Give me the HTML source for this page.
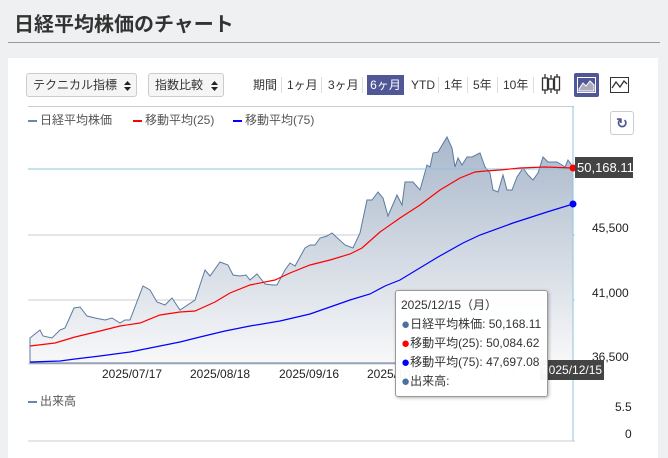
<!DOCTYPE html>
<html><head><meta charset="utf-8"><style>
*{margin:0;padding:0;box-sizing:border-box}
body{width:668px;height:446px;background:#eef0f2;font-family:"Liberation Sans","Noto Sans CJK JP",sans-serif;position:relative;overflow:hidden;color:#333}
.t{position:absolute;left:14px;top:8px;font-size:20px;font-weight:bold;color:#333}
.hr{position:absolute;left:8px;top:42px;width:652px;height:1px;background:#999}
.card{position:absolute;left:8px;top:58px;width:650px;height:400px;background:#fff}
.sel{position:absolute;top:73px;height:24px;border:1px solid #ccc;border-radius:3px;background:#f5f5f5;font-size:12px;line-height:22px;padding-left:6px;color:#333}
.sel svg{position:absolute;right:5px;top:7px}
.p{position:absolute;top:76px;font-size:12px;color:#333;line-height:18px}
.sep{position:absolute;top:77px;width:1px;height:16px;background:#ddd}
.lg{position:absolute;font-size:12px;color:#555}
.lg i{display:inline-block;width:9px;height:2px;vertical-align:middle;margin-right:3px}
.ax{position:absolute;font-size:12px;color:#222}
.d{font-size:15px;line-height:12px;vertical-align:-1px}
</style></head><body>
<div class="t">日経平均株価のチャート</div>
<div class="hr"></div>
<div class="card"></div>
<div class="sel" style="left:26px;width:111px">テクニカル指標<svg width="7" height="10"><path d="M0 4L3.5 0L7 4ZM0 6L3.5 10L7 6Z" fill="#222"/></svg></div>
<div class="sel" style="left:148px;width:76px">指数比較<svg width="7" height="10"><path d="M0 4L3.5 0L7 4ZM0 6L3.5 10L7 6Z" fill="#222"/></svg></div>
<div class="p" style="left:253px">期間</div><div class="sep" style="left:281px"></div>
<div class="p" style="left:287px">1ヶ月</div><div class="sep" style="left:321px"></div>
<div class="p" style="left:328px">3ヶ月</div><div class="sep" style="left:362px"></div>
<div class="p" style="left:367px;background:#4f5797;color:#fff;padding:0 3px;top:75px;height:20px;line-height:20px;width:37px;text-align:center">6ヶ月</div>
<div class="p" style="left:411px">YTD</div><div class="sep" style="left:438px"></div>
<div class="p" style="left:444px">1年</div><div class="sep" style="left:467px"></div>
<div class="p" style="left:473px">5年</div><div class="sep" style="left:497px"></div>
<div class="p" style="left:503px">10年</div><div class="sep" style="left:533px"></div>
<svg style="position:absolute;left:540px;top:72px" width="22" height="24"><g stroke="#333" stroke-width="1.3" fill="none"><line x1="5" y1="2" x2="5" y2="22"/><rect x="2.5" y="6" width="5" height="12" fill="#fff"/><line x1="11" y1="3" x2="11" y2="21"/><rect x="8.5" y="7" width="5" height="10" fill="#fff"/><line x1="17" y1="2" x2="17" y2="22"/><rect x="14.5" y="5" width="5" height="13" fill="#fff"/></g></svg>
<div style="position:absolute;left:574px;top:73px;width:25px;height:24px;background:#4f5797;border-radius:2px"></div>
<svg style="position:absolute;left:577px;top:77px" width="19" height="16"><rect x="0.5" y="0.5" width="18" height="15" fill="none" stroke="#fff"/><path d="M2 12 L6 6 L9 9 L13 4 L17 8 L17 14 L2 14Z" fill="#aab" stroke="#fff"/></svg>
<svg style="position:absolute;left:610px;top:77px" width="19" height="16"><rect x="0.5" y="0.5" width="18" height="15" fill="none" stroke="#333"/><path d="M2 11 L6 5 L10 10 L14 4 L17 7" fill="none" stroke="#333" stroke-width="1.3"/></svg>
<div style="position:absolute;left:28px;top:106px;width:546px;height:1px;background:#ccc"></div>
<div style="position:absolute;left:610px;top:111px;width:24px;height:24px;border:1px solid #ccc;border-radius:3px;background:#fff;color:#4f5797;font-size:14px;text-align:center;line-height:22px;font-weight:bold">↻</div>
<div class="lg" style="left:28px;top:111px"><i style="background:#6b86aa"></i>日経平均株価</div>
<div class="lg" style="left:133px;top:111px"><i style="background:#f00"></i>移動平均(25)</div>
<div class="lg" style="left:233px;top:111px"><i style="background:#00f"></i>移動平均(75)</div>
<div class="lg" style="left:28px;top:392px"><i style="background:#6b86aa"></i>出来高</div>
<svg style="position:absolute;left:0;top:0" width="668" height="446">
<defs><linearGradient id="g" x1="0" y1="0" x2="0" y2="1"><stop offset="0" stop-color="#a9b8cb"/><stop offset="1" stop-color="#f8f8f9"/></linearGradient></defs>
<line x1="28" y1="235" x2="575" y2="235" stroke="#ccc"/>
<line x1="28" y1="300" x2="575" y2="300" stroke="#ccc"/>
<line x1="28" y1="364" x2="575" y2="364" stroke="#ccc"/>
<line x1="28" y1="441" x2="575" y2="441" stroke="#ccc"/>
<path d="M30 338 L40 330 L43 336 L52 338 L60 330 L65 328 L74 308 L80 307 L87 316 L95 318 L105 320 L112 318 L120 323 L125 320 L130 320 L143 286 L150 290 L157 302 L165 305 L172 298 L180 310 L195 300 L205 270 L210 276 L220 262 L228 265 L233 275 L240 276 L246 275 L250 280 L257 274 L265 284 L273 285 L277 285 L285 270 L290 263 L295 266 L305 248 L310 245 L315 245 L320 238 L327 236 L332 233 L345 245 L353 248 L360 233 L367 200 L372 200 L378 192 L383 198 L388 216 L397 195 L402 205 L405 182 L413 182 L420 190 L427 165 L430 167 L433 153 L438 152 L447 137 L452 148 L455 167 L458 158 L462 165 L467 157 L472 157 L480 153 L485 167 L490 173 L493 190 L498 192 L503 175 L507 190 L512 190 L517 177 L523 168 L528 175 L533 180 L538 173 L543 157 L548 162 L557 162 L562 165 L565 167 L568 160 L573 167 L573 363 L30 363Z" fill="url(#g)" stroke="#5c7aa0" stroke-width="1"/>
<line x1="28" y1="169" x2="573" y2="169" stroke="#8cc4e0"/>
<line x1="573" y1="106" x2="573" y2="441" stroke="#8cc4e0"/>
<polyline points="30,346 55,343 75,337 100,331 120,326 140,323 160,315 180,312 195,311 215,302 230,293 250,285 275,280 290,273 310,265 330,260 350,254 362,248 380,232 400,218 420,205 440,190 460,178 475,172 485,171 500,170 520,168 545,167 573,168" fill="none" stroke="#f00" stroke-width="1.2"/>
<polyline points="30,362 60,361 75,359 100,356 130,352 150,348 165,345 180,342 200,337 225,331 250,326 280,321 310,314 330,307 350,300 370,294 385,286 400,280 438,257 463,243 480,235 513,223 547,212 573,204" fill="none" stroke="#00f" stroke-width="1.2"/>
<circle cx="573" cy="168" r="3.5" fill="#f00"/><circle cx="573" cy="204" r="3.5" fill="#00f"/>
</svg>
<div class="ax" style="left:592px;top:157px">50,000</div>
<div style="position:absolute;left:575px;top:157px;width:58px;height:21px;background:#444;color:#fff;font-size:13px;line-height:21px;padding-left:2px">50,168.11</div>
<div class="ax" style="left:592px;top:221px">45,500</div>
<div class="ax" style="left:592px;top:286px">41,000</div>
<div class="ax" style="left:592px;top:350px">36,500</div>
<div class="ax" style="left:615px;top:400px">5.5</div>
<div class="ax" style="left:625px;top:427px">0</div>
<div class="ax" style="left:102px;top:367px">2025/07/17</div>
<div class="ax" style="left:190px;top:367px">2025/08/18</div>
<div class="ax" style="left:279px;top:367px">2025/09/16</div>
<div class="ax" style="left:367px;top:367px">2025/10/16</div>
<div class="ax" style="left:456px;top:367px;color:#ccc">2025/11/14</div>
<div style="position:absolute;left:540px;top:360px;width:64px;height:20px;background:#444;color:#fff;font-size:12px;line-height:20px;padding-left:2px">2025/12/15</div>
<div style="position:absolute;left:395px;top:290px;width:153px;height:107px;background:rgba(255,255,255,.96);border:1px solid #999;border-radius:3px;box-shadow:1px 1px 3px rgba(0,0,0,.3);font-size:12px;line-height:19px;padding:5px 0 0 5px;color:#333">
2025/12/15（月）<br><span class="d" style="color:#4a6fa0">●</span>日経平均株価: 50,168.11<br><span class="d" style="color:#f00">●</span>移動平均(25): 50,084.62<br><span class="d" style="color:#00f">●</span>移動平均(75): 47,697.08<br><span class="d" style="color:#4a6fa0">●</span>出来高:</div>
</body></html>
